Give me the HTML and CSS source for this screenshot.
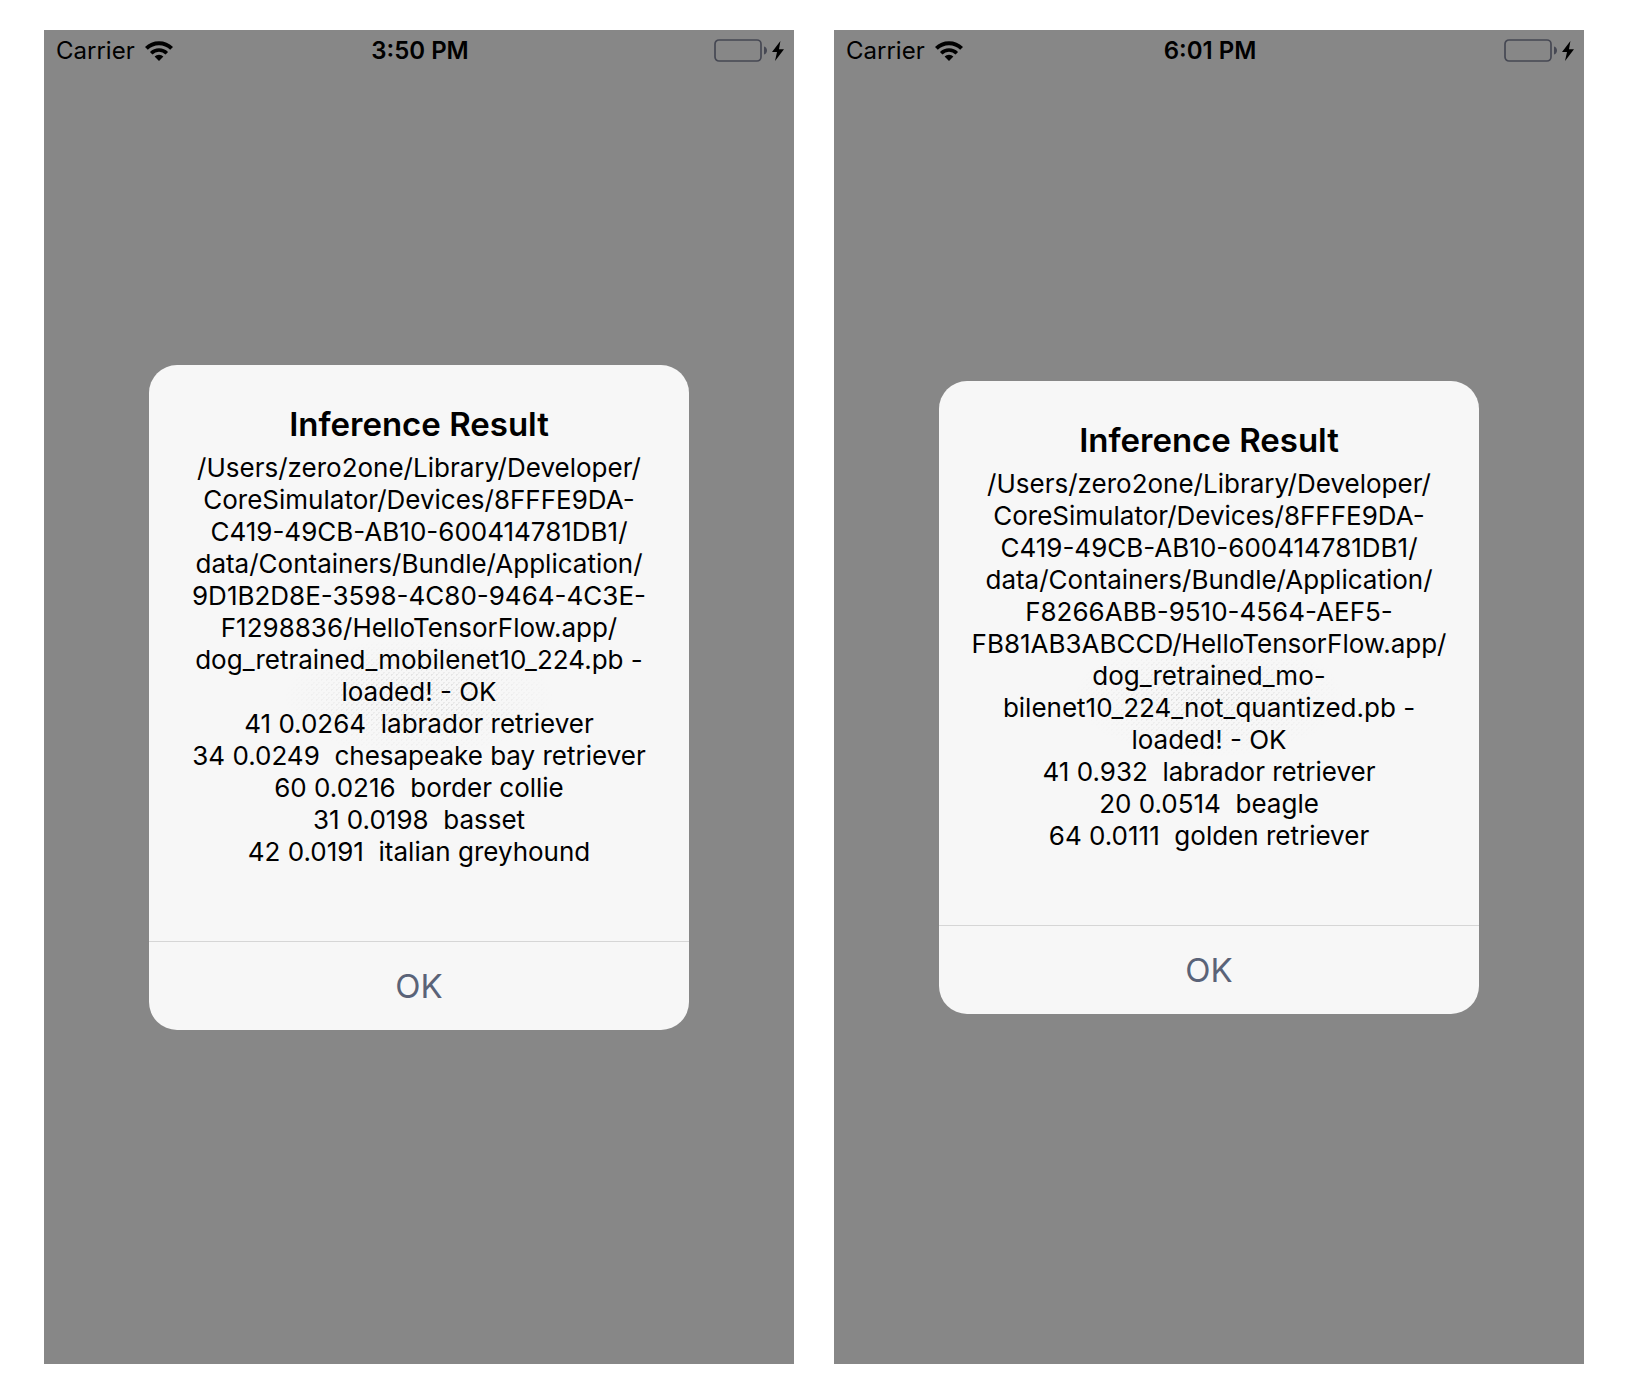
FILE: index.html
```html
<!DOCTYPE html>
<html lang="en">
<head>
<meta charset="utf-8">
<meta name="viewport" content="width=device-width, initial-scale=1">
<title>Inference Result</title>
<link rel="stylesheet" href="styles.css">
</head>
<body>
<svg class="sprite" aria-hidden="true">
  <symbol id="wifi" viewBox="0 0 28 20">
    <g fill="none" stroke="#000" stroke-width="4">
      <path d="M1.4 7.4a18 18 0 0 1 25.2 0"/>
      <path d="M6.2 12.2a11.2 11.2 0 0 1 15.6 0" stroke-width="3.6"/>
    </g>
    <path d="M9.6 15.6a6.3 6.3 0 0 1 8.8 0L14 20z"/>
  </symbol>
  <symbol id="battery" viewBox="0 0 54 24">
    <rect x="1" y="1" width="46" height="21" rx="4" fill="none" stroke="#464853" stroke-width="1.7"/>
    <path d="M50 7.5c4 1 4 7 0 8z" fill="#464853"/>
  </symbol>
  <symbol id="bolt" viewBox="0 0 12 20">
    <path d="M8.4 0 0 11h5L3 20l9-11.800H7z"/>
  </symbol>
</svg>
<main class="gallery">
  <section class="phone">
    <header class="status">
      <div class="status-left"><span>Carrier</span><svg class="wifi"><use href="#wifi"/></svg></div>
      <time class="clock">3:50 PM</time>
      <div class="status-right"><svg class="battery"><use href="#battery"/></svg><svg class="bolt"><use href="#bolt"/></svg></div>
    </header>
    <div class="stage">
      <div class="alert" role="alertdialog" aria-labelledby="title-1" aria-describedby="text-1">
        <h2 class="alert-title" id="title-1">Inference Result</h2>
        <p class="alert-text" id="text-1">/Users/zero2one/Library/Developer/
CoreSimulator/Devices/8FFFE9DA-
C419-49CB-AB10-600414781DB1/
data/Containers/Bundle/Application/
9D1B2D8E-3598-4C80-9464-4C3E-
F1298836/HelloTensorFlow.app/
dog_retrained_mobilenet10_224.pb -
loaded! - OK
41 0.0264  labrador retriever
34 0.0249  chesapeake bay retriever
60 0.0216  border collie
31 0.0198  basset
42 0.0191  italian greyhound</p>
        <button class="alert-button" type="button">OK</button>
      </div>
    </div>
  </section>
  <section class="phone">
    <header class="status">
      <div class="status-left"><span>Carrier</span><svg class="wifi"><use href="#wifi"/></svg></div>
      <time class="clock">6:01 PM</time>
      <div class="status-right"><svg class="battery"><use href="#battery"/></svg><svg class="bolt"><use href="#bolt"/></svg></div>
    </header>
    <div class="stage">
      <div class="alert" role="alertdialog" aria-labelledby="title-2" aria-describedby="text-2">
        <h2 class="alert-title" id="title-2">Inference Result</h2>
        <p class="alert-text" id="text-2">/Users/zero2one/Library/Developer/
CoreSimulator/Devices/8FFFE9DA-
C419-49CB-AB10-600414781DB1/
data/Containers/Bundle/Application/
F8266ABB-9510-4564-AEF5-
FB81AB3ABCCD/HelloTensorFlow.app/
dog_retrained_mo-
bilenet10_224_not_quantized.pb -
loaded! - OK
41 0.932  labrador retriever
20 0.0514  beagle
64 0.0111  golden retriever</p>
        <button class="alert-button" type="button">OK</button>
      </div>
    </div>
  </section>
</main>
</body>
</html>
```
FILE: styles.css
```css
* {
  box-sizing: border-box;
}

body {
  margin: 0;
  background: #fff;
  color: #000;
  font-family: Inter, "Liberation Sans", sans-serif;
}

.sprite {
  display: none;
}

.gallery {
  display: grid;
  grid-template-columns: 1fr 1fr;
  gap: 40px;
  padding: 30px 44px 34px;
}

.phone {
  display: grid;
  grid-template-rows: 42px 1fr 42px;
  aspect-ratio: 750 / 1334;
  background: #878787;
}

.status {
  display: grid;
  grid-template-columns: 1fr auto 1fr;
  align-items: center;
  padding: 0 10px 0 12px;
  font-size: 24px;
  line-height: 42px;
}

.status-left,
.status-right {
  display: flex;
  align-items: center;
}

.status-left {
  gap: 10px;
}

.status-right {
  justify-content: flex-end;
  gap: 4px;
}

.clock {
  font-weight: 600;
}

.wifi {
  width: 28px;
  height: 20px;
}

.battery {
  width: 54px;
  height: 24px;
}

.bolt {
  width: 12px;
  height: 20px;
}

.stage {
  display: flex;
  align-items: center;
  justify-content: center;
}

.alert {
  position: relative;
  width: 72%;
  padding-top: 38px;
  border-radius: 28px;
  overflow: hidden;
  background: #f7f7f7;
  text-align: center;
}

.alert::before {
  content: "";
  position: absolute;
  inset: 0;
  margin: auto;
  width: 270px;
  height: 120px;
  background:
    radial-gradient(circle, #dadada 1px, transparent 1px) 0 0 / 5px 5px,
    radial-gradient(circle, #e4e4e4 1px, transparent 1px) 2px 3px / 5px 5px;
  mask-image: radial-gradient(closest-side, #000, transparent);
}

.alert-title {
  position: relative;
  margin: 0 0 7px;
  font-size: 33px;
  font-weight: 600;
  line-height: 42px;
}

.alert-text {
  position: relative;
  margin: 0;
  padding-bottom: 73px;
  font-size: 26px;
  line-height: 32px;
  white-space: pre;
}

.alert-button {
  display: block;
  width: 100%;
  height: 89px;
  padding: 0;
  border: 0;
  border-top: 1px solid #d6d6d6;
  background: transparent;
  color: #5a6378;
  font: inherit;
  font-size: 33px;
}
```
